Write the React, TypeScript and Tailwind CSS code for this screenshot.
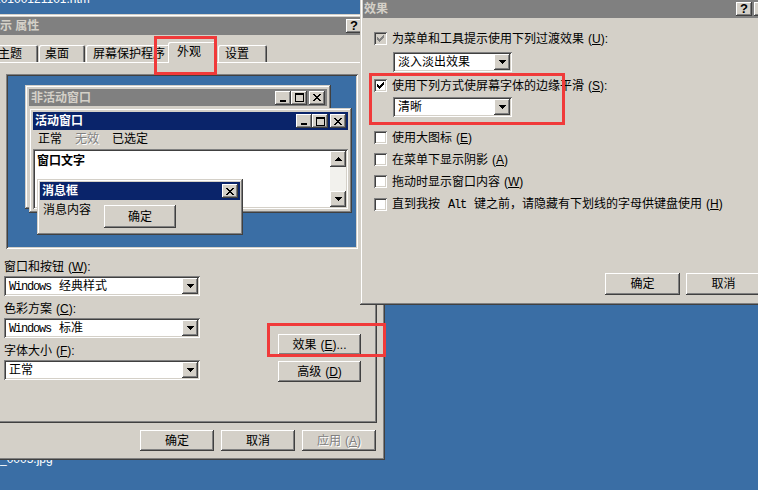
import type { ReactNode } from 'react';

const RAISED =
  'shadow-[inset_-1px_-1px_0_#404040,inset_1px_1px_0_#ffffff,inset_-2px_-2px_0_#808080]';
const WINDOW =
  'shadow-[inset_-1px_-1px_0_#404040,inset_1px_1px_0_#d4d0c8,inset_-2px_-2px_0_#808080,inset_2px_2px_0_#ffffff]';
const SUNKEN =
  'shadow-[inset_1px_1px_0_#808080,inset_-1px_-1px_0_#ffffff,inset_2px_2px_0_#404040,inset_-2px_-2px_0_#d4d0c8]';
const DIM = 'text-[#808080] [text-shadow:1px_1px_0_#ffffff]';

const GLYPHS: Record<string, string[]> = {
  close: ['##....##', '.##..##.', '..####..', '...##...', '..####..', '.##..##.', '##....##'],
  min: ['......', '......', '......', '......', '......', '......', '######', '######'],
  max: ['#########', '#########', '#.......#', '#.......#', '#.......#', '#.......#', '#.......#', '#.......#', '#########'],
  down: ['#######', '.#####.', '..###..', '...#...'],
  up: ['...#...', '..###..', '.#####.', '#######'],
  check: ['......#', '.....##', '#...###', '##.###.', '#####..', '.###...', '..#....'],
};

function Pix({ name, color = '#000000' }: { name: string; color?: string }) {
  const rows = GLYPHS[name];
  const w = rows[0].length;
  const h = rows.length;
  return (
    <svg width={w} height={h} viewBox={`0 0 ${w} ${h}`} shapeRendering="crispEdges">
      {rows.flatMap((r, y) =>
        r.split('').map((c, x) =>
          c === '#' ? <rect key={`${x}-${y}`} x={x} y={y} width={1} height={1} fill={color} /> : null
        )
      )}
    </svg>
  );
}

function CapBtn({ kind }: { kind: 'min' | 'max' | 'close' | 'help' }) {
  return (
    <div className={`w-[16px] h-[14px] bg-[#d4d0c8] flex items-center justify-center ${RAISED}`}>
      {kind === 'help' ? (
        <span className="font-bold text-[13px] leading-none text-black mt-[-1px]">?</span>
      ) : (
        <Pix name={kind} />
      )}
    </div>
  );
}

function Btn({ children, className = '' }: { children: ReactNode; className?: string }) {
  return (
    <div className={`bg-[#d4d0c8] flex items-center justify-center ${RAISED} ${className}`}>{children}</div>
  );
}

// mnemonic letter, e.g. (W)
function Key({ k }: { k: string }) {
  return (
    <span className="ml-[4px]">
      (<u>{k}</u>)
    </span>
  );
}

function Select({ children, width }: { children: ReactNode; width: string }) {
  return (
    <div className={`h-[20px] bg-white p-[2px] flex items-center ${width} ${SUNKEN}`}>
      <div className="flex-1 pl-[3px] whitespace-nowrap text-black">{children}</div>
      <div className={`w-[16px] h-[16px] bg-[#d4d0c8] flex items-center justify-center ${RAISED}`}>
        <Pix name="down" />
      </div>
    </div>
  );
}

function Check({ checked, dim, children }: { checked?: boolean; dim?: boolean; children: ReactNode }) {
  return (
    <div className="h-[13px] flex items-center gap-[5px] whitespace-nowrap">
      <div
        className={`w-[13px] h-[13px] shrink-0 flex items-center justify-center ${SUNKEN} ${
          dim ? 'bg-[#d4d0c8]' : 'bg-white'
        }`}
      >
        {checked && <Pix name="check" color={dim ? '#808080' : '#000000'} />}
      </div>
      <span>{children}</span>
    </div>
  );
}

const MONO = "font-['Liberation_Mono',monospace] tracking-[-1.2px] mr-[8px]";

export default function App() {
  return (
    <div className="relative w-[758px] h-[490px] overflow-hidden bg-[#3a6ea5] text-[12px] leading-[14px] text-black font-['Liberation_Sans','Noto_Sans_CJK_SC',sans-serif]">
      {/* desktop labels */}
      <div className="absolute left-[-6px] top-[-8px] text-white">20100121101.htm</div>
      <div className="absolute left-0 top-[452px] text-white">_0005.jpg</div>

      {/* 显示 属性 */}
      <div
        className={`absolute left-[-16px] top-[14px] w-[401px] h-[446px] z-10 bg-[#d4d0c8] p-[3px] flex flex-col ${WINDOW}`}
      >
        <div className="h-[18px] shrink-0 bg-[#808080] flex items-center pl-[1px] pr-[2px]">
          <span className="flex-1 font-bold text-[#d4d0c8]">显示 属性</span>
          <div className="flex gap-[2px]">
            <CapBtn kind="help" />
            <CapBtn kind="close" />
          </div>
        </div>

        <div className="mt-[7px] h-[20px] flex items-end ml-[7px]">
          <div className="h-[17px] w-[44px] pl-[4px] pt-[2px] rounded-t-[2px] shadow-[inset_1px_1px_0_#ffffff,inset_-1px_0_0_#404040,inset_-2px_0_0_#808080]">
            主题
          </div>
          <div className="h-[17px] w-[46px] ml-[1px] pl-[6px] pt-[2px] rounded-t-[2px] shadow-[inset_1px_1px_0_#ffffff,inset_-1px_0_0_#404040,inset_-2px_0_0_#808080]">
            桌面
          </div>
          <div className="h-[17px] w-[84px] ml-[1px] pl-[7px] pt-[2px] rounded-t-[2px] shadow-[inset_1px_1px_0_#ffffff,inset_-1px_0_0_#404040,inset_-2px_0_0_#808080]">
            屏幕保护程序
          </div>
          <div className="relative z-10 h-[21px] w-[48px] ml-[-2px] mr-[-2px] mb-[-1px] pl-[9px] pt-[3px] bg-[#d4d0c8] rounded-t-[2px] shadow-[inset_1px_1px_0_#ffffff,inset_-1px_0_0_#404040,inset_-2px_0_0_#808080]">
            外观
          </div>
          <div className="h-[17px] w-[49px] ml-[4px] pl-[7px] pt-[2px] rounded-t-[2px] shadow-[inset_1px_1px_0_#ffffff,inset_-1px_0_0_#404040,inset_-2px_0_0_#808080]">
            设置
          </div>
        </div>

        <div className={`h-[361px] ml-[2px] mr-[5px] flex flex-col ${RAISED}`}>
          {/* preview */}
          <div className={`relative mt-[12px] ml-[17px] w-[352px] h-[175px] bg-[#3a6ea5] ${SUNKEN}`}>
            <div
              className={`absolute left-[19px] top-[11px] w-[306px] h-[124px] bg-[#d4d0c8] p-[4px] ${WINDOW}`}
            >
              <div className="h-[17px] bg-[#808080] flex items-center pl-[2px] pr-[2px]">
                <span className="flex-1 font-bold text-[#d4d0c8]">非活动窗口</span>
                <CapBtn kind="min" />
                <CapBtn kind="max" />
                <div className="ml-[2px]">
                  <CapBtn kind="close" />
                </div>
              </div>
            </div>

            <div
              className={`absolute left-[23px] top-[34px] w-[323px] h-[105px] bg-[#d4d0c8] p-[4px] flex flex-col ${WINDOW}`}
            >
              <div className="h-[18px] shrink-0 bg-[#0a246a] flex items-center pl-[2px] pr-[2px]">
                <span className="flex-1 font-bold text-white">活动窗口</span>
                <CapBtn kind="min" />
                <CapBtn kind="max" />
                <div className="ml-[2px]">
                  <CapBtn kind="close" />
                </div>
              </div>
              <div className="h-[18px] shrink-0 flex items-center gap-[13px] pl-[5px]">
                <span>正常</span>
                <span className={DIM}>无效</span>
                <span>已选定</span>
              </div>
              <div className={`mt-[1px] h-[60px] bg-white p-[2px] flex ${SUNKEN}`}>
                <div className="flex-1 pl-[2px] pt-[3px] font-bold">窗口文字</div>
                <div className="w-[16px] flex flex-col bg-[#f2f1ed]">
                  <div className={`h-[16px] bg-[#d4d0c8] flex items-center justify-center ${RAISED}`}>
                    <Pix name="up" />
                  </div>
                  <div className="flex-1" />
                  <div className={`h-[16px] bg-[#d4d0c8] flex items-center justify-center ${RAISED}`}>
                    <Pix name="down" />
                  </div>
                </div>
              </div>
            </div>

            <div
              className={`absolute left-[31px] top-[105px] w-[206px] h-[56px] bg-[#d4d0c8] p-[3px] flex flex-col ${WINDOW}`}
            >
              <div className="h-[18px] shrink-0 bg-[#0a246a] flex items-center pl-[2px] pr-[2px]">
                <span className="flex-1 font-bold text-white">消息框</span>
                <CapBtn kind="close" />
              </div>
              <div className="flex items-start pl-[3px]">
                <span className="mt-[3px]">消息内容</span>
                <Btn className="ml-[13px] mt-[5px] w-[72px] h-[23px]">确定</Btn>
              </div>
            </div>
          </div>

          {/* form */}
          <div className="mt-[11px] flex">
            <div className="ml-[15px] w-[196px] flex flex-col">
              <div className="h-[14px]">
                窗口和按钮<Key k="W" />:
              </div>
              <div className="mt-[2px]">
                <Select width="w-[196px]">
                  <span className={MONO}>Windows</span>经典样式
                </Select>
              </div>
              <div className="h-[14px] mt-[6px]">
                色彩方案<Key k="C" />:
              </div>
              <div className="mt-[2px]">
                <Select width="w-[196px]">
                  <span className={MONO}>Windows</span>标准
                </Select>
              </div>
              <div className="h-[14px] mt-[6px]">
                字体大小<Key k="F" />:
              </div>
              <div className="mt-[2px]">
                <Select width="w-[196px]">正常</Select>
              </div>
            </div>
            <div className="ml-[78px] flex flex-col">
              <Btn className="mt-[74px] w-[83px] h-[21px]">
                效果<Key k="E" />
                ...
              </Btn>
              <Btn className="mt-[6px] w-[83px] h-[21px]">
                高级<Key k="D" />
              </Btn>
            </div>
          </div>
        </div>

        <div className="mt-[7px] flex justify-end gap-[7px] pr-[6px]">
          <Btn className="w-[74px] h-[21px]">确定</Btn>
          <Btn className="w-[74px] h-[21px]">取消</Btn>
          <Btn className={`w-[74px] h-[21px] ${DIM}`}>
            应用<Key k="A" />
          </Btn>
        </div>
      </div>

      {/* 效果 */}
      <div
        className={`absolute left-[360px] top-[-3px] w-[418px] h-[308px] z-20 bg-[#d4d0c8] p-[3px] flex flex-col ${WINDOW}`}
      >
        <div className="h-[18px] shrink-0 bg-[#808080] flex items-center pl-[1px] pr-[5px]">
          <span className="flex-1 font-bold text-[#d4d0c8]">效果</span>
          <div className="flex gap-[2px]">
            <CapBtn kind="help" />
            <CapBtn kind="close" />
          </div>
        </div>
        <div className="pl-[11px] flex flex-col">
          <div className="mt-[14px]">
            <Check checked dim>
              为菜单和工具提示使用下列过渡效果<Key k="U" />:
            </Check>
          </div>
          <div className="mt-[7px] ml-[19px]">
            <Select width="w-[119px]">淡入淡出效果</Select>
          </div>
          <div className="mt-[7px]">
            <Check checked>
              使用下列方式使屏幕字体的边缘平滑<Key k="S" />:
            </Check>
          </div>
          <div className="mt-[5px] ml-[19px]">
            <Select width="w-[119px]">清晰</Select>
          </div>
          <div className="mt-[14px]">
            <Check>
              使用大图标<Key k="E" />
            </Check>
          </div>
          <div className="mt-[9px]">
            <Check>
              在菜单下显示阴影<Key k="A" />
            </Check>
          </div>
          <div className="mt-[9px]">
            <Check>
              拖动时显示窗口内容<Key k="W" />
            </Check>
          </div>
          <div className="mt-[10px]">
            <Check>
              直到我按<span className={`${MONO} ml-[8px]`}>Alt</span>键之前，请隐藏有下划线的字母供键盘使用
              <Key k="H" />
            </Check>
          </div>
          <div className="mt-[62px] ml-[231px] flex gap-[6px]">
            <Btn className="w-[75px] h-[22px]">确定</Btn>
            <Btn className="w-[75px] h-[22px]">取消</Btn>
          </div>
        </div>
      </div>

      {/* red annotation boxes */}
      <div className="absolute z-30 left-[154px] top-[36px] w-[63px] h-[39px] border-[3px] border-[#f03a3a]" />
      <div className="absolute z-30 left-[369px] top-[73px] w-[196px] h-[52px] border-[3px] border-[#f03a3a]" />
      <div className="absolute z-30 left-[267px] top-[323px] w-[119px] h-[34px] border-[3px] border-[#f03a3a]" />
    </div>
  );
}
